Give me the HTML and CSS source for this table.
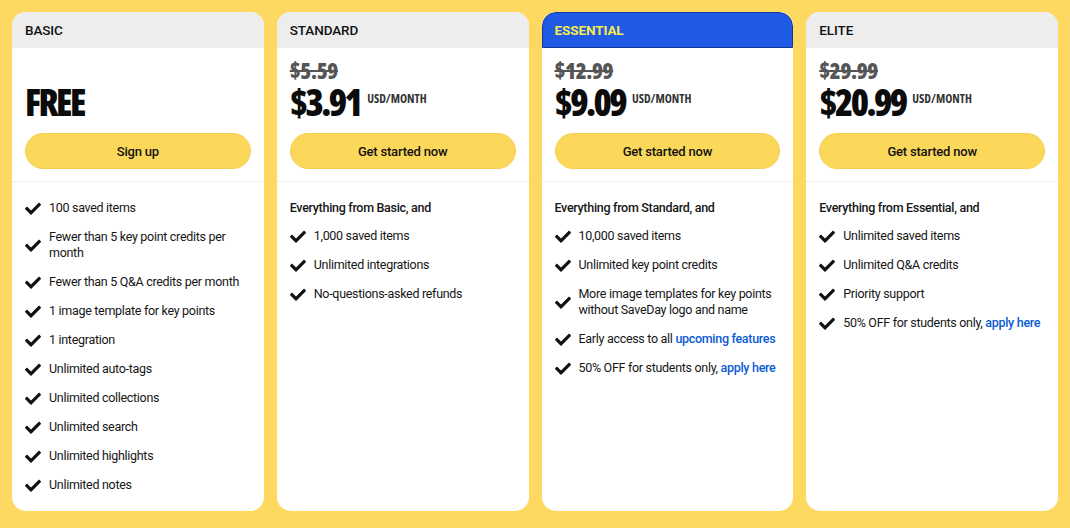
FILE: index.html
```html
<!DOCTYPE html>
<html lang="en">
<head>
<meta charset="utf-8">
<title>Pricing</title>
<link rel="stylesheet" href="styles.css">
</head>
<body>
<svg width="0" height="0" class="defs" aria-hidden="true">
  <symbol id="chk" viewBox="0 0 512 400">
    <path d="M173.9 391.4l-166.4-166.4c-10-10-10-26.2 0-36.2l36.2-36.2c10-10 26.2-10 36.2 0L192 264.7 432.1 24.6c10-10 26.2-10 36.2 0l36.2 36.2c10 10 10 26.2 0 36.2l-294.4 294.4c-10 10-26.2 10-36.2 0z"/>
  </symbol>
</svg>
<main class="plans">
  <section class="card">
    <header class="card-head">BASIC</header>
    <div class="card-top">
      <div class="old-price"></div>
      <div class="price-row"><span class="price">FREE</span></div>
      <a class="btn">Sign up</a>
    </div>
    <div class="card-features">
      <ul class="feats">
        <li><svg class="chk"><use href="#chk"/></svg><span>100 saved items</span></li>
        <li><svg class="chk"><use href="#chk"/></svg><span>Fewer than 5 key point credits per month</span></li>
        <li><svg class="chk"><use href="#chk"/></svg><span>Fewer than 5 Q&amp;A credits per month</span></li>
        <li><svg class="chk"><use href="#chk"/></svg><span>1 image template for key points</span></li>
        <li><svg class="chk"><use href="#chk"/></svg><span>1 integration</span></li>
        <li><svg class="chk"><use href="#chk"/></svg><span>Unlimited auto-tags</span></li>
        <li><svg class="chk"><use href="#chk"/></svg><span>Unlimited collections</span></li>
        <li><svg class="chk"><use href="#chk"/></svg><span>Unlimited search</span></li>
        <li><svg class="chk"><use href="#chk"/></svg><span>Unlimited highlights</span></li>
        <li><svg class="chk"><use href="#chk"/></svg><span>Unlimited notes</span></li>
      </ul>
    </div>
  </section>

  <section class="card">
    <header class="card-head">STANDARD</header>
    <div class="card-top">
      <div class="old-price"><s>$5.59</s></div>
      <div class="price-row"><span class="price">$3.91</span><span class="unit">USD/MONTH</span></div>
      <a class="btn">Get started now</a>
    </div>
    <div class="card-features">
      <p class="intro">Everything from Basic, and</p>
      <ul class="feats">
        <li><svg class="chk"><use href="#chk"/></svg><span>1,000 saved items</span></li>
        <li><svg class="chk"><use href="#chk"/></svg><span>Unlimited integrations</span></li>
        <li><svg class="chk"><use href="#chk"/></svg><span>No-questions-asked refunds</span></li>
      </ul>
    </div>
  </section>

  <section class="card">
    <header class="card-head card-head-blue">ESSENTIAL</header>
    <div class="card-top">
      <div class="old-price"><s>$12.99</s></div>
      <div class="price-row"><span class="price">$9.09</span><span class="unit">USD/MONTH</span></div>
      <a class="btn">Get started now</a>
    </div>
    <div class="card-features">
      <p class="intro">Everything from Standard, and</p>
      <ul class="feats">
        <li><svg class="chk"><use href="#chk"/></svg><span>10,000 saved items</span></li>
        <li><svg class="chk"><use href="#chk"/></svg><span>Unlimited key point credits</span></li>
        <li><svg class="chk"><use href="#chk"/></svg><span>More image templates for key points without SaveDay logo and name</span></li>
        <li><svg class="chk"><use href="#chk"/></svg><span>Early access to all <a class="link">upcoming features</a></span></li>
        <li><svg class="chk"><use href="#chk"/></svg><span>50% OFF for students only, <a class="link">apply here</a></span></li>
      </ul>
    </div>
  </section>

  <section class="card">
    <header class="card-head">ELITE</header>
    <div class="card-top">
      <div class="old-price"><s>$29.99</s></div>
      <div class="price-row"><span class="price">$20.99</span><span class="unit">USD/MONTH</span></div>
      <a class="btn">Get started now</a>
    </div>
    <div class="card-features">
      <p class="intro">Everything from Essential, and</p>
      <ul class="feats">
        <li><svg class="chk"><use href="#chk"/></svg><span>Unlimited saved items</span></li>
        <li><svg class="chk"><use href="#chk"/></svg><span>Unlimited Q&amp;A credits</span></li>
        <li><svg class="chk"><use href="#chk"/></svg><span>Priority support</span></li>
        <li><svg class="chk"><use href="#chk"/></svg><span>50% OFF for students only, <a class="link">apply here</a></span></li>
      </ul>
    </div>
  </section>
</main>
</body>
</html>
```

FILE: styles.css
```css
* { box-sizing: border-box; }
html, body { margin: 0; padding: 0; }
body {
  background: #fdd962;
  font-family: Roboto, "Liberation Sans", sans-serif;
  color: #161616;
  width: 1070px;
  height: 528px;
  overflow: hidden;
}
.defs { position: absolute; }
.plans {
  display: grid;
  grid-template-columns: repeat(4, 1fr);
  gap: 13px;
  padding: 12px 12px 17px 12px;
  height: 528px;
}
.card {
  background: #fff;
  border-radius: 14px;
  overflow: hidden;
  display: flex;
  flex-direction: column;
}
.card-head {
  height: 36px;
  background: #ededed;
  display: flex;
  align-items: center;
  padding: 0 13px;
  font-size: 13.5px;
  font-weight: 500;
  letter-spacing: -0.1px;
  color: #111;
}
.card-head-blue {
  background: #1e5ae4;
  color: #f6ea4c;
  font-weight: 700;
  border: 1px solid #14399a;
  border-radius: 14px 14px 0 0;
  padding-left: 12px;
}
.card-top {
  padding: 10px 13px 0;
  display: flex;
  flex-direction: column;
}
.old-price, .price, .unit {
  font-family: "Open Sans", "DejaVu Sans Condensed", sans-serif;
  font-stretch: 75%;
}
.old-price {
  height: 24px;
  font-weight: 800;
  font-size: 22px;
  line-height: 24px;
  color: #555;
  letter-spacing: -0.3px;
}
.old-price s { text-decoration-thickness: 2px; }
.price-row {
  height: 40px;
  display: flex;
  align-items: flex-start;
  gap: 7px;
}
.price {
  font-weight: 800;
  font-size: 37px;
  line-height: 40px;
  letter-spacing: -2.6px;
  color: #0b0b0b;
}
.unit {
  font-weight: 700;
  font-size: 12px;
  line-height: 12px;
  margin-top: 11px;
  color: #333;
}
.btn {
  margin-top: 11px;
  height: 36px;
  border-radius: 18px;
  background: #fbd85a;
  border: 1px solid #f3cf55;
  display: flex;
  align-items: center;
  justify-content: center;
  font-size: 13px;
  font-weight: 500;
  letter-spacing: -0.2px;
  color: #111;
}
.card-features {
  margin-top: 12px;
  border-top: 1px dotted #e2e2e2;
  padding: 18px 8px 0 13px;
  font-size: 12.5px;
  line-height: 16px;
}
.intro {
  margin: 0 0 12px;
  font-weight: 500;
  letter-spacing: -0.3px;
}
.feats {
  list-style: none;
  margin: 0;
  padding: 0;
  display: flex;
  flex-direction: column;
  gap: 13px;
}
.feats li {
  display: flex;
  align-items: center;
  gap: 8px;
  letter-spacing: -0.3px;
}
.chk {
  width: 16px;
  height: 13px;
  flex: none;
  fill: #111;
}
.link {
  color: #0a5bd6;
  font-weight: 500;
}
```
